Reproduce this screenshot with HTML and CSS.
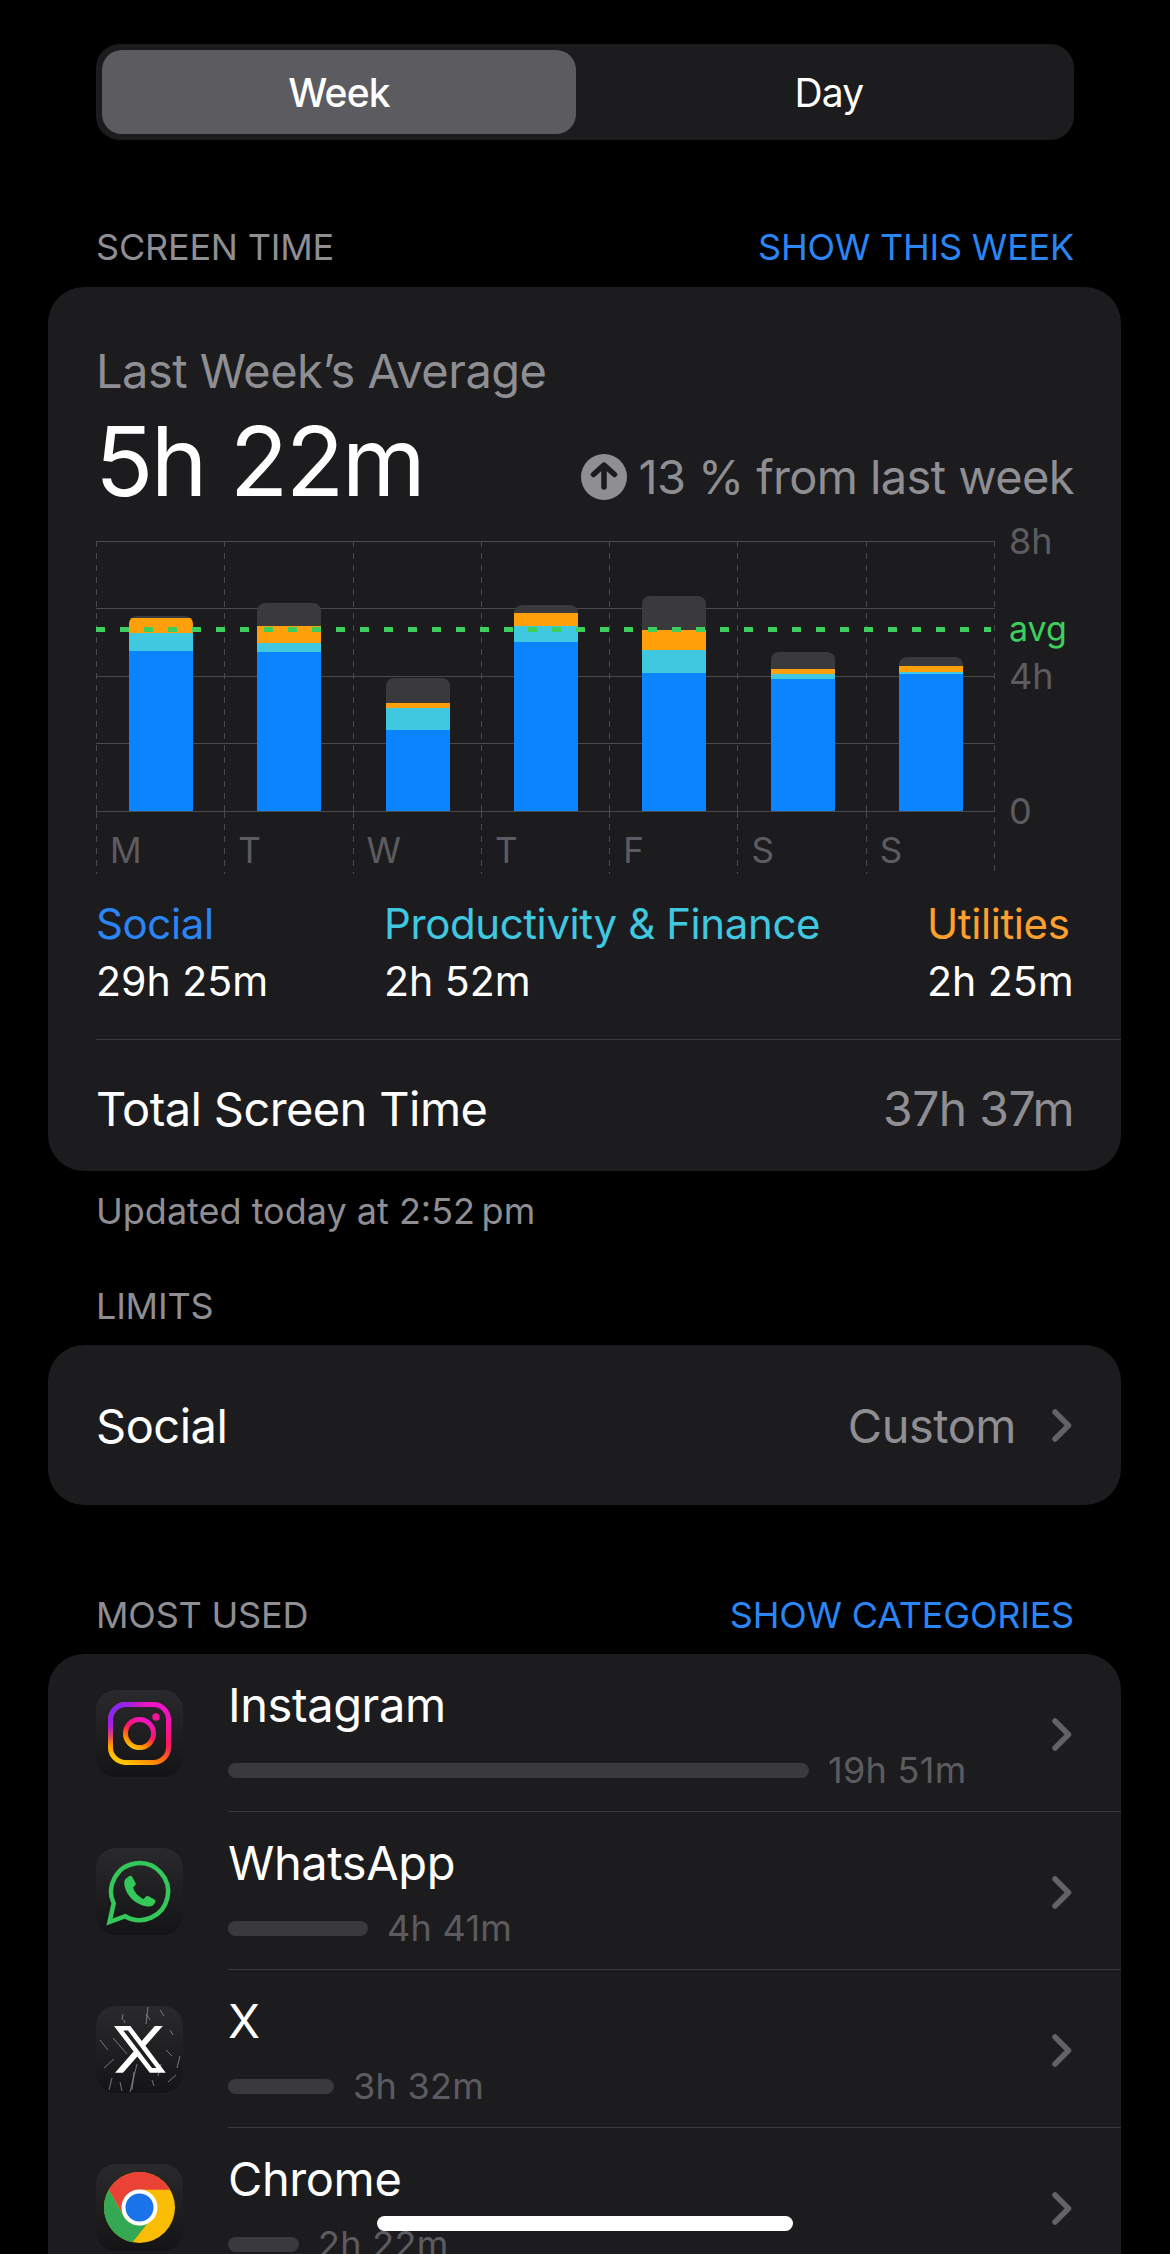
FILE: index.html
```html
<!DOCTYPE html>
<html>

<head>
    <title>Screen Time</title>
    <link rel="stylesheet" href="styles.css">
</head>

<body>
    <div class="screen">
        <div class="seg">
            <div class="seg-item active">Week</div>
            <div class="seg-item">Day</div>
        </div>

        <div class="section-head first">
            <span>SCREEN TIME</span>
            <span class="link">SHOW THIS WEEK</span>
        </div>

        <div class="card summary">
            <div class="avg-title">Last Week’s Average</div>
            <div class="avg-row">
                <span class="avg-value">5h 22m</span>
                <span class="avg-change">
                    <svg class="up-icon" viewBox="0 0 46 46">
                        <circle cx="23" cy="23" r="23" fill="#8e8e93" />
                        <path d="M23 33V13M12.500 20.500 23 11l10.500 9.500" fill="none" stroke="#1c1c1e" stroke-width="5.500" stroke-linecap="round" stroke-linejoin="round" />
                    </svg>
                    13 % from last week
                </span>
            </div>

            <div class="chart">
                <div class="plot">
                    <div class="bars">
                        <div class="col">
                            <div class="bar">
                                <i class="other" style="height:2px"></i>
                                <i class="util" style="height:15px"></i>
                                <i class="prod" style="height:18px"></i>
                                <i class="social" style="height:160px"></i>
                            </div>
                        </div>
                        <div class="col">
                            <div class="bar">
                                <i class="other" style="height:23px"></i>
                                <i class="util" style="height:17px"></i>
                                <i class="prod" style="height:9px"></i>
                                <i class="social" style="height:159px"></i>
                            </div>
                        </div>
                        <div class="col">
                            <div class="bar">
                                <i class="other" style="height:25px"></i>
                                <i class="util" style="height:5px"></i>
                                <i class="prod" style="height:22px"></i>
                                <i class="social" style="height:81px"></i>
                            </div>
                        </div>
                        <div class="col">
                            <div class="bar">
                                <i class="other" style="height:8px"></i>
                                <i class="util" style="height:13px"></i>
                                <i class="prod" style="height:16px"></i>
                                <i class="social" style="height:169px"></i>
                            </div>
                        </div>
                        <div class="col">
                            <div class="bar">
                                <i class="other" style="height:34px"></i>
                                <i class="util" style="height:20px"></i>
                                <i class="prod" style="height:23px"></i>
                                <i class="social" style="height:138px"></i>
                            </div>
                        </div>
                        <div class="col">
                            <div class="bar">
                                <i class="other" style="height:17px"></i>
                                <i class="util" style="height:5px"></i>
                                <i class="prod" style="height:5px"></i>
                                <i class="social" style="height:132px"></i>
                            </div>
                        </div>
                        <div class="col">
                            <div class="bar">
                                <i class="other" style="height:9px"></i>
                                <i class="util" style="height:6px"></i>
                                <i class="prod" style="height:2px"></i>
                                <i class="social" style="height:137px"></i>
                            </div>
                        </div>
                    </div>
                    <div class="days">
                        <span>M</span><span>T</span><span>W</span><span>T</span><span>F</span><span>S</span><span>S</span>
                    </div>
                    <div class="avg-line"></div>
                </div>
                <div class="yaxis">
                    <span>8h</span>
                    <span>4h</span>
                    <span>0</span>
                    <em>avg</em>
                </div>
            </div>

            <div class="legend">
                <div>
                    <div class="legend-name blue">Social</div>
                    <div class="legend-time">29h 25m</div>
                </div>
                <div>
                    <div class="legend-name teal">Productivity &amp; Finance</div>
                    <div class="legend-time">2h 52m</div>
                </div>
                <div>
                    <div class="legend-name orange">Utilities</div>
                    <div class="legend-time">2h 25m</div>
                </div>
            </div>

            <div class="total">
                <span>Total Screen Time</span>
                <span class="muted">37h 37m</span>
            </div>
        </div>

        <div class="updated">Updated today at 2:52&#8201;pm</div>

        <div class="section-head limits-head">
            <span>LIMITS</span>
        </div>

        <div class="card limit-row">
            <span>Social</span>
            <span class="limit-right">
                <span class="muted">Custom</span>
                <svg class="chevron" viewBox="0 0 20 33">
                    <path d="M3 3l13.500 13.500L3 30" />
                </svg>
            </span>
        </div>

        <div class="section-head used-head">
            <span>MOST USED</span>
            <span class="link">SHOW CATEGORIES</span>
        </div>

        <div class="card apps">
            <div class="app">
                <svg class="app-icon" viewBox="0 0 87 87">
                    <defs>
                        <linearGradient id="tile" x1="0" y1="0" x2="0" y2="1">
                            <stop offset="0" stop-color="#2a2a2c" />
                            <stop offset="1" stop-color="#141416" />
                        </linearGradient>
                        <linearGradient id="ig" x1="0.25" y1="1" x2="0.75" y2="0">
                            <stop offset="0" stop-color="#ffc400" />
                            <stop offset="0.25" stop-color="#ff7a00" />
                            <stop offset="0.55" stop-color="#ff1464" />
                            <stop offset="1" stop-color="#f014c8" />
                        </linearGradient>
                        <radialGradient id="igp" gradientUnits="userSpaceOnUse" cx="14" cy="14" r="42">
                            <stop offset="0" stop-color="#6f2cff" />
                            <stop offset="0.5" stop-color="#a81fe0" />
                            <stop offset="1" stop-color="#c81fc8" stop-opacity="0" />
                        </radialGradient>
                    </defs>
                    <rect class="icon-bg" width="87" height="87" rx="20" />
                    <g fill="none" stroke-width="5">
                        <rect x="14.500" y="14.500" width="58" height="58" rx="15" stroke="url(#ig)" />
                        <rect x="14.500" y="14.500" width="58" height="58" rx="15" stroke="url(#igp)" />
                        <circle cx="43.500" cy="43.500" r="14" stroke="url(#ig)" />
                    </g>
                    <circle cx="60" cy="27" r="3.700" fill="#f5149e" />
                </svg>
                <div class="app-info">
                    <div class="app-name">Instagram</div>
                    <div class="usage">
                        <div class="usage-bar" style="width:581px"></div>
                        <span>19h 51m</span>
                    </div>
                </div>
                <svg class="chevron" viewBox="0 0 20 33">
                    <path d="M3 3l13.500 13.500L3 30" />
                </svg>
            </div>

            <div class="app">
                <svg class="app-icon" viewBox="0 0 87 87">
                    <rect class="icon-bg" width="87" height="87" rx="20" />
                    <path d="M13.500 74 17.700 55.500A28.500 28.500 0 1 1 29.250 68.200Z" fill="none" stroke="#34c759" stroke-width="4.500" stroke-linejoin="miter" />
                    <path d="M30 30.500l3.500-2.500c1-.5 2-.3 2.500.6l3.500 6.500c.5 1 .3 1.800-.5 2.500l-2 2c1.500 5 6 9.500 10.500 11.500l2.500-2.500c.8-.7 1.700-.8 2.500-.3l6 3.300c1 .6 1.200 1.600.8 2.600-1.300 3.200-4 4.800-7.300 4.300C40 57.500 29 47 28.300 35.500c-.1-2 .4-3.800 1.700-5Z" fill="#34c759" />
                </svg>
                <div class="app-info">
                    <div class="app-name">WhatsApp</div>
                    <div class="usage">
                        <div class="usage-bar" style="width:140px"></div>
                        <span>4h 41m</span>
                    </div>
                </div>
                <svg class="chevron" viewBox="0 0 20 33">
                    <path d="M3 3l13.500 13.500L3 30" />
                </svg>
            </div>

            <div class="app">
                <svg class="app-icon" viewBox="0 0 87 87">
                    <rect class="icon-bg" width="87" height="87" rx="20" />
                    <g stroke="#a0a0a3" stroke-width="0.700" fill="none">
                        <path d="M52 1l-2 17M50 8l4 6M64 4l4 6M27 8l-1 6M4 34l8 10M17 32l14 16M8 62l10-9M28 14l1 3M74 24l3 5" />
                        <path d="M41 58l-7 28M13 84l3-12M72 76l8-7M65 58l-3 12M70 44l6 6M84 50l-3 12M24 76l2 9M38 66l-2 18M56 74l2 6" />
                    </g>
                    <path transform="translate(15 14.600) scale(2.400)" d="M18.244 2.250h3.308l-7.227 8.260 8.502 11.240H16.170l-5.214-6.817L4.990 21.750H1.680l7.730-8.835L1.254 2.250H8.080l4.713 6.231zm-1.161 17.520h1.833L7.084 4.126H5.117z" fill="#fff" />
                </svg>
                <div class="app-info">
                    <div class="app-name">X</div>
                    <div class="usage">
                        <div class="usage-bar" style="width:106px"></div>
                        <span>3h 32m</span>
                    </div>
                </div>
                <svg class="chevron" viewBox="0 0 20 33">
                    <path d="M3 3l13.500 13.500L3 30" />
                </svg>
            </div>

            <div class="app">
                <svg class="app-icon" viewBox="0 0 87 87">
                    <rect class="icon-bg" width="87" height="87" rx="20" />
                    <circle cx="43.500" cy="43.500" r="35.500" fill="#fbbc04" />
                    <path d="M43.500 8A35.500 35.500 0 0 1 74.200 25.700H43.500A18 18 0 0 0 27.500 51.500L12.800 25.700A35.500 35.500 0 0 1 43.500 8Z" fill="#ea4335" />
                    <path d="M12.800 25.700 27.900 52.400A18 18 0 0 0 51.500 59.500L36.500 78.300A35.500 35.500 0 0 1 12.800 25.700Z" fill="#34a853" />
                    <circle cx="43.500" cy="43.500" r="18" fill="#fff" />
                    <circle cx="43.500" cy="43.500" r="14" fill="#1a73e8" />
                </svg>
                <div class="app-info">
                    <div class="app-name">Chrome</div>
                    <div class="usage">
                        <div class="usage-bar" style="width:71px"></div>
                        <span>2h 22m</span>
                    </div>
                </div>
                <svg class="chevron" viewBox="0 0 20 33">
                    <path d="M3 3l13.500 13.500L3 30" />
                </svg>
            </div>
        </div>
    </div>

    <div class="home-bar"></div>
</body>

</html>
```

FILE: styles.css
```css
* {
    box-sizing: border-box;
}

html,
body {
    margin: 0;
    height: 2254px;
    overflow: hidden;
    background: #000;
}

body {
    position: relative;
    font-family: Inter, "Noto Sans", sans-serif;
    color: #fff;
}

.screen {
    padding: 44px 49px 0 48px;
}

.seg {
    display: flex;
    height: 96px;
    margin: 0 47px 0 48px;
    padding: 6px;
    background: #1c1c1e;
    border-radius: 24px;
}

.seg-item {
    flex: 1;
    display: flex;
    align-items: center;
    justify-content: center;
    padding-left: 14px;
    border-radius: 20px;
    font-size: 39px;
    letter-spacing: -0.8px;
}

.seg-item.active {
    flex: none;
    width: 474px;
    padding-left: 0;
    background: #5c5c60;
    font-weight: 500;
}

.section-head {
    display: flex;
    justify-content: space-between;
    align-items: center;
    height: 48px;
    margin: 0 47px 0 48px;
    font-size: 36px;
    letter-spacing: -0.2px;
    color: #8e8e93;
}

.section-head.first {
    margin-top: 83px;
    margin-bottom: 16px;
}

.link {
    color: #2a85f5;
}

.card {
    background: #1c1c1e;
    border-radius: 36px;
}

.summary {
    height: 884px;
    padding: 56px 47px 0 48px;
}

.avg-title {
    font-size: 47px;
    line-height: 55px;
    letter-spacing: -0.5px;
    color: #8e8e93;
}

.avg-row {
    display: flex;
    justify-content: space-between;
    align-items: flex-start;
    height: 143px;
}

.avg-value {
    margin: 5px 0 0 -1px;
    font-size: 96px;
    line-height: 116px;
    letter-spacing: -2.5px;
}

.avg-change {
    display: flex;
    align-items: center;
    gap: 11px;
    margin-top: 51px;
    font-size: 47px;
    line-height: 56px;
    letter-spacing: -0.6px;
    color: #8e8e93;
}

.up-icon {
    width: 46px;
    height: 46px;
}

.chart {
    position: relative;
    display: flex;
    height: 333px;
}

.plot {
    position: relative;
    width: 899px;
    background-image: repeating-linear-gradient(to bottom, #4a4a4c 0 6px, transparent 6px 12px);
    background-size: 1px 100%;
    background-position: right top;
    background-repeat: no-repeat;
}

.bars {
    display: grid;
    grid-template-columns: repeat(7, 128.300px);
    height: 271px;
    background-image: repeating-linear-gradient(to bottom, #4a4a4c 0 1px, transparent 1px 67px, #4a4a4c 67px 68px, transparent 68px 135px);
}

.col {
    display: flex;
    align-items: flex-end;
    justify-content: center;
    padding: 0 0 1px 2px;
    background-image: repeating-linear-gradient(to bottom, #4a4a4c 0 6px, transparent 6px 12px);
    background-size: 1px 100%;
    background-repeat: no-repeat;
}

.bar {
    width: 64px;
    border-radius: 8px 8px 0 0;
    overflow: hidden;
}

.bar i {
    display: block;
}

.other {
    background: #3a3a3c;
}

.util {
    background: #ff9f0a;
}

.prod {
    background: #40c8e0;
}

.social {
    background: #0a84ff;
}

.days {
    display: grid;
    grid-template-columns: repeat(7, 128.300px);
    height: 62px;
}

.days span {
    padding: 17px 0 0 14px;
    font-size: 35px;
    line-height: 42px;
    color: #5c5c60;
    background-image: repeating-linear-gradient(to bottom, #4a4a4c 0 6px, transparent 6px 12px);
    background-size: 1px 100%;
    background-repeat: no-repeat;
}

.avg-line {
    position: absolute;
    top: 86px;
    left: 0;
    right: 4px;
    height: 5px;
    background-image: repeating-linear-gradient(to right, #3ccf5f 0 9px, transparent 9px 24px);
}

.yaxis {
    display: flex;
    flex-direction: column;
    justify-content: space-between;
    height: 270px;
    margin-left: 14px;
    font-size: 36px;
    color: #5c5c60;
}

.yaxis span {
    height: 0;
    line-height: 0;
}

.yaxis em {
    position: absolute;
    top: 68px;
    left: 913px;
    font-size: 34px;
    font-style: normal;
    line-height: 40px;
    color: #3ccf5f;
}

.legend {
    display: grid;
    grid-template-columns: 288px 543px auto;
    margin-top: 20px;
}

.legend-name {
    font-size: 42px;
    line-height: 60px;
    letter-spacing: -0.4px;
}

.legend-time {
    font-size: 41px;
    line-height: 54px;
}

.blue {
    color: #2a85f5;
}

.teal {
    color: #40c8e0;
}

.orange {
    color: #ff9f2e;
}

.total {
    display: flex;
    justify-content: space-between;
    align-items: center;
    height: 132px;
    margin-top: 31px;
    margin-right: -47px;
    padding: 6px 47px 0 0;
    border-top: 1px solid #3a3a3c;
    font-size: 47px;
    letter-spacing: -0.6px;
}

.total .muted {
    font-size: 48px;
}

.muted {
    color: #8e8e93;
}

.updated {
    height: 40px;
    margin: 20px 47px 0 48px;
    font-size: 36px;
    line-height: 40px;
    color: #8e8e93;
}

.section-head.limits-head {
    margin-top: 51px;
    margin-bottom: 15px;
}

.limit-row {
    display: flex;
    justify-content: space-between;
    align-items: center;
    height: 160px;
    padding: 0 49px 0 48px;
    font-size: 47px;
    letter-spacing: -0.5px;
}

.limit-right {
    display: flex;
    align-items: center;
    gap: 36px;
}

.chevron {
    width: 20px;
    height: 33px;
    fill: none;
    stroke: #636366;
    stroke-width: 5.500;
    stroke-linecap: round;
    stroke-linejoin: round;
}

.section-head.used-head {
    margin-top: 86px;
    margin-bottom: 15px;
}

.apps {
    height: 640px;
}

.app {
    display: flex;
    align-items: flex-start;
    height: 158px;
    padding: 36px 0 0 48px;
}

.app-icon {
    flex: none;
    width: 87px;
    height: 87px;
}

.icon-bg {
    fill: url(#tile);
}

.app-info {
    flex: 1;
    height: 158px;
    margin: -36px 0 0 45px;
    border-bottom: 1px solid #3a3a3c;
    padding-top: 22px;
}

.app:last-child .app-info {
    border-bottom: none;
}

.app-name {
    height: 58px;
    font-size: 47px;
    line-height: 58px;
    letter-spacing: -0.4px;
}

.usage {
    display: flex;
    align-items: center;
    gap: 19px;
    height: 40px;
    margin-top: 16px;
    font-size: 36px;
    letter-spacing: 0.3px;
    color: #5c5c60;
}

.usage-bar {
    height: 15px;
    background: #3a3a3c;
    border-radius: 8px;
}

.app > .chevron {
    flex: none;
    margin: 28px 49px 0 -69px;
}

.home-bar {
    position: absolute;
    left: 377px;
    top: 2216px;
    width: 416px;
    height: 15px;
    background: #fff;
    border-radius: 8px;
}
```
